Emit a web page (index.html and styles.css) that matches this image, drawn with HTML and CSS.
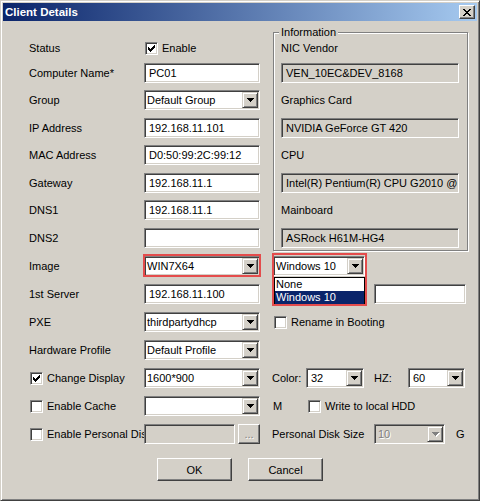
FILE: index.html
```html
<!DOCTYPE html>
<html>
<head>
<meta charset="utf-8">
<title>Client Details</title>
<link rel="stylesheet" href="styles.css">
</head>
<body>
<div class="window">
  <div class="titlebar">
    <span class="title">Client Details</span>
    <span class="close"><svg width="8" height="7" viewBox="0 0 8 7" shape-rendering="crispEdges"><path d="M0 0h2v1h-2zM6 0h2v1h-2zM1 1h2v1h-2zM5 1h2v1h-2zM2 2h4v1h-4zM3 3h2v1h-2zM2 4h4v1h-4zM1 5h2v1h-2zM5 5h2v1h-2zM0 6h2v1h-2zM6 6h2v1h-2z"/></svg></span>
  </div>
  <div class="client">
    <div class="form">
      <div class="group">
        <span class="legend">Information</span>
        <div class="group-body">
          <div class="label">NIC Vendor</div>
          <div class="edit ro wide">VEN_10EC&amp;DEV_8168</div>
          <div class="label">Graphics Card</div>
          <div class="edit ro wide">NVIDIA GeForce GT 420</div>
          <div class="label">CPU</div>
          <div class="edit ro wide">Intel(R) Pentium(R) CPU G2010 @ 2.80GHz</div>
          <div class="label">Mainboard</div>
          <div class="edit ro wide">ASRock H61M-HG4</div>
        </div>
      </div>

      <div class="label c1">Status</div>
      <div class="check c2 indent1"><span class="cb"><svg width="7" height="7" viewBox="0 0 7 7" shape-rendering="crispEdges"><path d="M0 2h1v3h-1zM1 3h1v3h-1zM2 4h1v3h-1zM3 3h1v3h-1zM4 2h1v3h-1zM5 1h1v3h-1zM6 0h1v3h-1z"/></svg></span>Enable</div>

      <div class="label c1">Computer Name*</div>
      <div class="edit c2">PC01</div>

      <div class="label c1">Group</div>
      <div class="combo c2"><span class="val">Default Group</span><span class="arrow"><svg width="7" height="4" viewBox="0 0 7 4" shape-rendering="crispEdges"><path d="M0 0h7v1h-1v1h-1v1h-1v1h-1v-1h-1v-1h-1v-1h-1z"/></svg></span></div>

      <div class="label c1">IP Address</div>
      <div class="edit c2">192.168.11.101</div>

      <div class="label c1">MAC Address</div>
      <div class="edit c2">D0:50:99:2C:99:12</div>

      <div class="label c1">Gateway</div>
      <div class="edit c2">192.168.11.1</div>

      <div class="label c1">DNS1</div>
      <div class="edit c2">192.168.11.1</div>

      <div class="label c1">DNS2</div>
      <div class="edit c2"></div>

      <div class="label c1">Image</div>
      <div class="combo c2 marked"><span class="val">WIN7X64</span><span class="arrow"><svg width="7" height="4" viewBox="0 0 7 4" shape-rendering="crispEdges"><path d="M0 0h7v1h-1v1h-1v1h-1v1h-1v-1h-1v-1h-1v-1h-1z"/></svg></span></div>
      <div class="imgsel c4">
        <div class="combo os"><span class="val">Windows 10</span><span class="arrow"><svg width="7" height="4" viewBox="0 0 7 4" shape-rendering="crispEdges"><path d="M0 0h7v1h-1v1h-1v1h-1v1h-1v-1h-1v-1h-1v-1h-1z"/></svg></span></div>
        <div class="dropdown">
          <div class="opt">None</div>
          <div class="opt sel">Windows 10</div>
        </div>
        <div class="redbox"></div>
      </div>

      <div class="label c1">1st Server</div>
      <div class="edit c2">192.168.11.100</div>
      <div class="edit c4 server2"></div>

      <div class="label c1">PXE</div>
      <div class="combo c2"><span class="val">thirdpartydhcp</span><span class="arrow"><svg width="7" height="4" viewBox="0 0 7 4" shape-rendering="crispEdges"><path d="M0 0h7v1h-1v1h-1v1h-1v1h-1v-1h-1v-1h-1v-1h-1z"/></svg></span></div>
      <div class="check c4 indent2"><span class="cb"></span>Rename in Booting</div>

      <div class="label c1">Hardware Profile</div>
      <div class="combo c2"><span class="val">Default Profile</span><span class="arrow"><svg width="7" height="4" viewBox="0 0 7 4" shape-rendering="crispEdges"><path d="M0 0h7v1h-1v1h-1v1h-1v1h-1v-1h-1v-1h-1v-1h-1z"/></svg></span></div>

      <div class="check c1 indent1"><span class="cb"><svg width="7" height="7" viewBox="0 0 7 7" shape-rendering="crispEdges"><path d="M0 2h1v3h-1zM1 3h1v3h-1zM2 4h1v3h-1zM3 3h1v3h-1zM4 2h1v3h-1zM5 1h1v3h-1zM6 0h1v3h-1z"/></svg></span>Change Display</div>
      <div class="combo c2"><span class="val">1600*900</span><span class="arrow"><svg width="7" height="4" viewBox="0 0 7 4" shape-rendering="crispEdges"><path d="M0 0h7v1h-1v1h-1v1h-1v1h-1v-1h-1v-1h-1v-1h-1z"/></svg></span></div>
      <div class="row-r c4">
        <span class="rlab w34">Color:</span>
        <div class="combo w58"><span class="val">32</span><span class="arrow"><svg width="7" height="4" viewBox="0 0 7 4" shape-rendering="crispEdges"><path d="M0 0h7v1h-1v1h-1v1h-1v1h-1v-1h-1v-1h-1v-1h-1z"/></svg></span></div>
        <span class="rlab w34 ml10">HZ:</span>
        <div class="combo w57"><span class="val">60</span><span class="arrow"><svg width="7" height="4" viewBox="0 0 7 4" shape-rendering="crispEdges"><path d="M0 0h7v1h-1v1h-1v1h-1v1h-1v-1h-1v-1h-1v-1h-1z"/></svg></span></div>
      </div>

      <div class="check c1 indent1"><span class="cb"></span>Enable Cache</div>
      <div class="combo c2"><span class="val"></span><span class="arrow"><svg width="7" height="4" viewBox="0 0 7 4" shape-rendering="crispEdges"><path d="M0 0h7v1h-1v1h-1v1h-1v1h-1v-1h-1v-1h-1v-1h-1z"/></svg></span></div>
      <div class="row-r c4">
        <span class="rlab w36 pl1">M</span>
        <div class="check"><span class="cb"></span>Write to local HDD</div>
      </div>

      <div class="check c1 indent1 clip"><span class="cb"></span>Enable Personal Disk</div>
      <div class="row-r c2">
        <div class="edit dis w91"></div>
        <span class="mini">...</span>
      </div>
      <div class="row-r c4">
        <span class="rlab w102">Personal Disk Size</span>
        <div class="combo w71 off"><span class="val">10</span><span class="arrow"><svg width="7" height="4" viewBox="0 0 7 4" shape-rendering="crispEdges"><path d="M0 0h7v1h-1v1h-1v1h-1v1h-1v-1h-1v-1h-1v-1h-1z"/></svg></span></div>
        <span class="rlab ml11">G</span>
      </div>
    </div>

    <div class="buttons">
      <span class="btn">OK</span>
      <span class="btn">Cancel</span>
    </div>
  </div>
</div>
</body>
</html>
```

FILE: styles.css
```css
* {
  box-sizing: border-box;
}

html,
body {
  margin: 0;
  padding: 0;
}

body {
  width: 480px;
  height: 501px;
  overflow: hidden;
  background: #d4d0c8;
  color: #000;
  font-family: "Liberation Sans", Arial, sans-serif;
  font-size: 11px;
}

.window {
  width: 480px;
  height: 501px;
  display: flex;
  flex-direction: column;
  padding: 2px;
  background: #d4d0c8;
  border: 1px solid;
  border-color: #d4d0c8 #404040 #404040 #d4d0c8;
  box-shadow: inset 1px 1px 0 #fff, inset -1px -1px 0 #808080;
}

.titlebar {
  height: 18px;
  flex: none;
  display: flex;
  align-items: center;
  justify-content: space-between;
  padding: 0 2px;
  background: linear-gradient(to right, #0a246a, #a6caf0);
}

.title {
  color: #fff;
  font-weight: bold;
  font-size: 11.5px;
}

.close {
  width: 16px;
  height: 14px;
  display: flex;
  align-items: center;
  justify-content: center;
  background: #d4d0c8;
  border: 1px solid;
  border-color: #fff #404040 #404040 #fff;
  box-shadow: inset -1px -1px 0 #808080;
}

.close svg {
  display: block;
  fill: #000;
}

.client {
  flex: 1;
  display: flex;
  flex-direction: column;
}

.form {
  margin: 17px 0 0 26px;
  display: grid;
  grid-template-columns: 115px 116px 12px 196px;
  grid-template-rows: 25px 27px 28px 27px 28px 27px 28px 28px 28px 28px 28px 28px 28px 28px 20px;
}

.c1 { grid-column: 1; }
.c2 { grid-column: 2; }
.c4 { grid-column: 4; }

.label {
  height: 20px;
  display: flex;
  align-items: center;
  white-space: nowrap;
}

/* sunken edit box */
.edit {
  width: 116px;
  height: 20px;
  display: flex;
  align-items: center;
  padding: 0 4px;
  background: #fff;
  border: 1px solid;
  border-color: #808080 #fff #fff #808080;
  box-shadow: inset 1px 1px 0 #404040, inset -1px -1px 0 #d4d0c8;
  white-space: nowrap;
  overflow: hidden;
}

.edit.ro {
  background: #d4d0c8;
}

.edit.wide {
  width: 178px;
}

.edit.dis {
  background: #d4d0c8;
}

.w91 { width: 91px; }

.server2 {
  margin-left: 102px;
  width: 92px;
}

/* combo box */
.combo {
  width: 116px;
  height: 20px;
  display: flex;
  padding: 1px;
  background: #fff;
  border: 1px solid;
  border-color: #808080 #fff #fff #808080;
  box-shadow: inset 1px 1px 0 #404040, inset -1px -1px 0 #d4d0c8;
}

.combo .val {
  flex: 1;
  min-width: 0;
  display: flex;
  align-items: center;
  padding-left: 1px;
  white-space: nowrap;
  overflow: hidden;
}

.arrow {
  width: 16px;
  height: 16px;
  flex: none;
  display: flex;
  align-items: center;
  justify-content: center;
  background: #d4d0c8;
  border: 1px solid;
  border-color: #d4d0c8 #404040 #404040 #d4d0c8;
  box-shadow: inset 1px 1px 0 #fff, inset -1px -1px 0 #808080;
}

.arrow svg {
  display: block;
  fill: #000;
}

.combo.off {
  background: #d4d0c8;
}

.combo.off .val {
  color: #808080;
  text-shadow: 1px 1px 0 #fff;
  padding-left: 2px;
}

.combo.off .arrow svg {
  fill: #808080;
  filter: drop-shadow(1px 1px 0 #fff);
}

.w58 { width: 58px; }
.w57 { width: 57px; }
.w71 { width: 71px; }

.combo.w58 .val,
.combo.w57 .val {
  padding-left: 3px;
}

.marked {
  position: relative;
}

.marked::after {
  content: "";
  position: absolute;
  top: -3px;
  left: -2px;
  right: -2px;
  bottom: -2px;
  border: 2px solid #e44c4c;
}

/* checkbox */
.check {
  height: 20px;
  display: flex;
  align-items: center;
  gap: 4px;
  white-space: nowrap;
}

.indent1 { margin-left: 1px; }
.indent2 { margin-left: 2px; }

.clip {
  overflow: hidden;
}

.cb {
  width: 13px;
  height: 13px;
  flex: none;
  display: flex;
  padding: 2px 0 0 2px;
  background: #fff;
  border: 1px solid;
  border-color: #808080 #fff #fff #808080;
  box-shadow: inset 1px 1px 0 #404040, inset -1px -1px 0 #d4d0c8;
}

.cb svg {
  display: block;
  fill: #000;
}

/* group box */
.group {
  grid-column: 4;
  grid-row: 1 / span 8;
  position: relative;
  width: 195px;
  height: 219px;
  margin: -6px 0 0 1px;
  align-self: start;
  padding-top: 5px;
  border: 1px solid #808080;
  box-shadow: inset 1px 1px 0 #fff, 1px 1px 0 #fff;
}

.legend {
  position: absolute;
  top: -7px;
  left: 5px;
  padding: 0 2px;
  line-height: 13px;
  background: #d4d0c8;
}

.group-body {
  display: grid;
  grid-template-rows: 25px 27px 28px 27px 28px 27px 28px 28px;
  padding-left: 7px;
}

/* OS select with open list */
.imgsel {
  position: relative;
  height: 20px;
}

.combo.os {
  width: 92px;
  margin-left: 1px;
}

.dropdown {
  position: absolute;
  top: 21px;
  left: 2px;
  width: 91px;
  height: 28px;
  background: #fff;
  border: 1px solid #000;
}

.opt {
  height: 13px;
  line-height: 13px;
  padding-left: 1px;
}

.opt.sel {
  background: #0a246a;
  color: #fff;
}

.redbox {
  position: absolute;
  top: -3px;
  left: 0;
  width: 95px;
  height: 53px;
  border: 2px solid #e44c4c;
}

/* right side rows */
.row-r {
  height: 20px;
  display: flex;
  align-items: center;
}

.rlab {
  flex: none;
  white-space: nowrap;
}

.w34 { width: 34px; }
.w36 { width: 36px; }
.w102 { width: 102px; }
.pl1 { padding-left: 1px; }
.ml10 { margin-left: 10px; }
.ml11 { margin-left: 11px; }

.mini {
  width: 22px;
  height: 20px;
  margin-left: 3px;
  display: flex;
  align-items: center;
  justify-content: center;
  color: #808080;
  text-shadow: 1px 1px 0 #fff;
  background: #d4d0c8;
  border: 1px solid;
  border-color: #fff #404040 #404040 #fff;
  box-shadow: inset -1px -1px 0 #808080;
}

/* bottom buttons */
.buttons {
  display: flex;
  justify-content: center;
  gap: 16px;
  margin-top: 14px;
}

.btn {
  width: 75px;
  height: 23px;
  display: flex;
  align-items: center;
  justify-content: center;
  background: #d4d0c8;
  border: 1px solid;
  border-color: #fff #404040 #404040 #fff;
  box-shadow: inset -1px -1px 0 #808080;
}
```
